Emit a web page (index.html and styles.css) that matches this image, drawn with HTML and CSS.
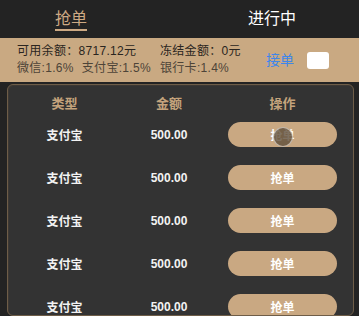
FILE: index.html
```html
<!DOCTYPE html>
<html lang="zh">
<head>
<meta charset="utf-8">
<link rel="stylesheet" href="styles.css">
</head>
<body>
<div class="tabs">
  <div class="tab active">抢单</div>
  <div class="tab">进行中</div>
</div>
<div class="info">
  <div class="stats">
    <div class="line main"><span class="c1">可用余额：8717.12元</span><span>冻结金额：0元</span></div>
    <div class="line sub"><span class="c1"><span class="rate">微信:1.6%</span><span>支付宝:1.5%</span></span><span>银行卡:1.4%</span></div>
  </div>
  <div class="accept">接单</div>
  <div class="check"></div>
</div>
<div class="card">
  <div class="row head"><div>类型</div><div>金额</div><div>操作</div></div>
  <div class="row"><div>支付宝</div><div>500.00</div><div><button class="grab">抢单<span class="touch"></span></button></div></div>
  <div class="row"><div>支付宝</div><div>500.00</div><div><button class="grab">抢单</button></div></div>
  <div class="row"><div>支付宝</div><div>500.00</div><div><button class="grab">抢单</button></div></div>
  <div class="row"><div>支付宝</div><div>500.00</div><div><button class="grab">抢单</button></div></div>
  <div class="row"><div>支付宝</div><div>500.00</div><div><button class="grab">抢单</button></div></div>
</div>
</body>
</html>
```
FILE: styles.css
```css
html, body {
  margin: 0;
  padding: 0;
  background: #232323;
  height: 316px;
  overflow: hidden;
  font-family: "Liberation Sans", "Noto Sans CJK SC", sans-serif;
}
.tabs {
  height: 38px;
  display: flex;
  justify-content: space-between;
  padding: 0 63px 0 55px;
  box-sizing: border-box;
}
.tab {
  font-size: 16px;
  line-height: 20px;
  padding-top: 9px;
  height: 20px;
  color: #ffffff;
}
.tab.active {
  color: #cda983;
  border-bottom: 2px solid #cda983;
}
.info {
  background: #c9a982;
  height: 44px;
  box-sizing: border-box;
  padding: 5px 0 5px 17px;
  display: flex;
  align-items: center;
}
.stats {
  width: 249px;
}
.line {
  display: grid;
  grid-template-columns: 143px 1fr;
  font-size: 12px;
  line-height: 17px;
  white-space: nowrap;
  letter-spacing: 0.3px;
}
.line.main { color: #2a2520; }
.line.sub { color: #4d4438; }
.rate { margin-right: 8px; }
.accept {
  color: #3f86ea;
  font-size: 14px;
  line-height: 17px;
  width: 41px;
}
.check {
  width: 22px;
  height: 17px;
  background: #ffffff;
  border-radius: 3px;
}
.card {
  margin: 2px 5px 0 7px;
  background: #333333;
  border: 1px solid #6e5d48;
  border-radius: 6px;
  height: 230px;
  overflow: hidden;
  box-shadow: inset 1px 1px 0 #3d3833;
}
.row {
  display: grid;
  grid-template-columns: 113px 96px 131px;
  align-items: center;
  height: 43px;
  text-align: center;
  font-size: 12px;
  font-weight: bold;
  color: #f2f2f2;
}
.row.head {
  height: 17px;
  line-height: 17px;
  padding: 10px 0 1px;
  font-size: 13px;
  color: #c4a37c;
}
.grab {
  position: relative;
  width: 109px;
  height: 25px;
  border: none;
  border-radius: 13px;
  background: #c9a882;
  color: #ffffff;
  font-family: "Liberation Sans", "Noto Sans CJK SC", sans-serif;
  font-size: 12px;
  font-weight: bold;
  padding: 0;
  display: block;
  margin: 0 auto;
}
.touch {
  position: absolute;
  left: 45px;
  top: 5px;
  width: 20px;
  height: 20px;
  border-radius: 50%;
  background: rgba(95, 78, 58, 0.8);
  border: 1px solid rgba(255, 255, 255, 0.55);
  box-sizing: border-box;
}
```
